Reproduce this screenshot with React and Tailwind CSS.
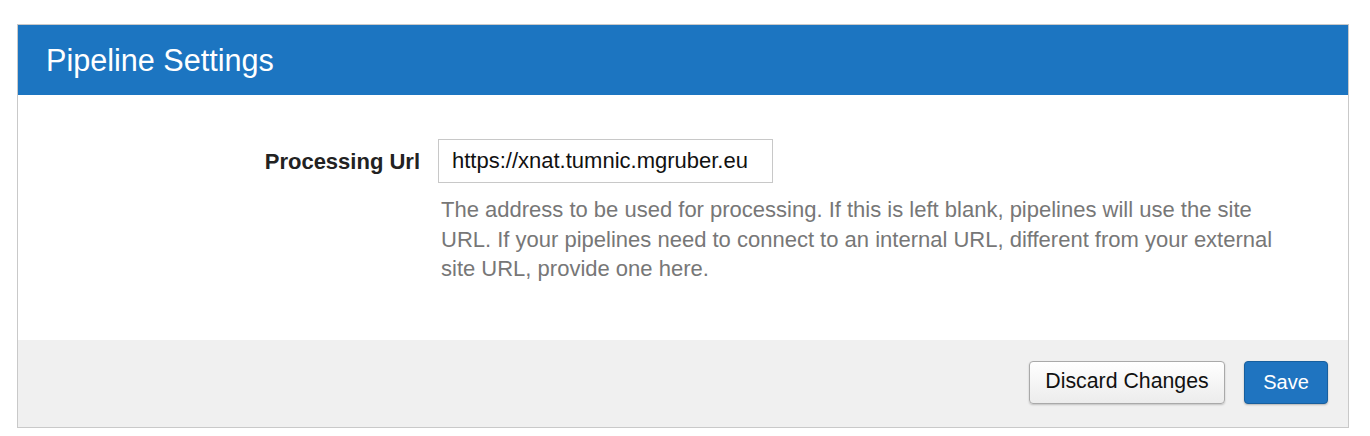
import React, { useState } from 'react';

export default function App() {
  const [url, setUrl] = useState('https://xnat.tumnic.mgruber.eu');

  return (
    <div className="w-[1370px] h-[436px] bg-white pt-[24px] pl-[17px]" style={{ fontFamily: '"Liberation Sans", Arial, sans-serif' }}>
      <div className="w-[1332px] border border-[#c9c9c9]">
        {/* Header */}
        <div className="h-[70px] bg-[#1c75c1] flex items-center pl-[28px]">
          <h2 className="text-[30.6px] text-white leading-none">Pipeline Settings</h2>
        </div>

        {/* Body */}
        <div className="bg-white pt-[44px] pb-[56px] flex">
          <label className="w-[402px] text-right text-[22px] font-bold text-[#222] h-[44px] flex items-center justify-end">
            Processing Url
          </label>
          <div className="ml-[18px]">
            <input
              type="text"
              value={url}
              onChange={(e) => setUrl(e.target.value)}
              className="w-[335px] h-[44px] border border-[#c8c8c8] px-[13px] text-[22px] text-[#111] outline-none"
            />
            <p className="mt-[12px] w-[853px] pl-[3px] text-[22px] leading-[29.5px] text-[#777]">
              The address to be used for processing. If this is left blank, pipelines will use the site URL. If your pipelines need to connect to an internal URL, different from your external site URL, provide one here.
            </p>
          </div>
        </div>

        {/* Footer */}
        <div className="bg-[#f0f0f0] h-[87px] flex items-start justify-end gap-[19px] pr-[20px] pt-[21px]">
          <button className="h-[43px] w-[196px] rounded-[4px] border border-[#a9a9a9] bg-gradient-to-b from-white to-[#ececec] shadow-[0_1px_2px_rgba(0,0,0,0.2)] text-[21.3px] text-[#111]">
            Discard Changes
          </button>
          <button className="h-[43px] w-[84px] rounded-[4px] border border-[#175f9e] bg-[#1f74c0] shadow-[0_1px_2px_rgba(0,0,0,0.25)] text-[20px] text-white">
            Save
          </button>
        </div>
      </div>
    </div>
  );
}
